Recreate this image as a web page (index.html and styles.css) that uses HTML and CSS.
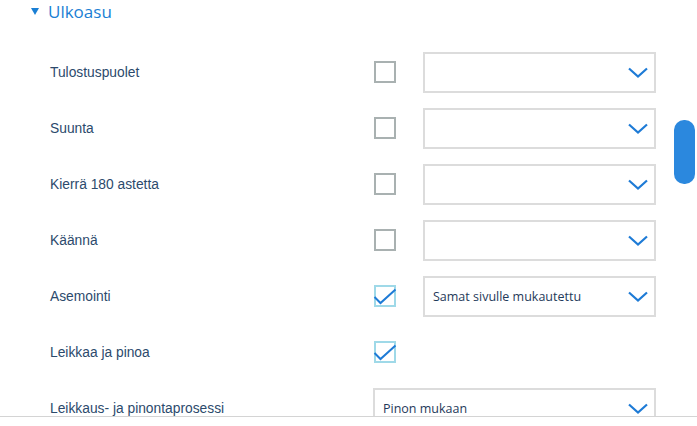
FILE: index.html
```html
<!DOCTYPE html>
<html>
<head>
<meta charset="utf-8">
<link rel="stylesheet" href="styles.css">
</head>
<body>
<div class="panel">
  <div class="header">
    <span class="tri"></span>
    <span class="title">Ulkoasu</span>
  </div>
  <div class="rows">
    <div class="row">
      <div class="label">Tulostuspuolet</div>
      <div class="cb"></div>
      <div class="dd"><span class="dd-text"></span><svg class="chev" width="20" height="11" viewBox="0 0 20 11"><path d="M1 1.5 L10 9.5 L19 1.5" fill="none" stroke="#1e7bd6" stroke-width="2.2"/></svg></div>
    </div>
    <div class="row">
      <div class="label">Suunta</div>
      <div class="cb"></div>
      <div class="dd"><span class="dd-text"></span><svg class="chev" width="20" height="11" viewBox="0 0 20 11"><path d="M1 1.5 L10 9.5 L19 1.5" fill="none" stroke="#1e7bd6" stroke-width="2.2"/></svg></div>
    </div>
    <div class="row">
      <div class="label">Kierrä 180 astetta</div>
      <div class="cb"></div>
      <div class="dd"><span class="dd-text"></span><svg class="chev" width="20" height="11" viewBox="0 0 20 11"><path d="M1 1.5 L10 9.5 L19 1.5" fill="none" stroke="#1e7bd6" stroke-width="2.2"/></svg></div>
    </div>
    <div class="row">
      <div class="label">Käännä</div>
      <div class="cb"></div>
      <div class="dd"><span class="dd-text"></span><svg class="chev" width="20" height="11" viewBox="0 0 20 11"><path d="M1 1.5 L10 9.5 L19 1.5" fill="none" stroke="#1e7bd6" stroke-width="2.2"/></svg></div>
    </div>
    <div class="row">
      <div class="label">Asemointi</div>
      <div class="cb checked"><svg width="22" height="22" viewBox="0 0 22 22"><path d="M0.5 12 L6.5 18 L21.5 4.5" fill="none" stroke="#1e7bd6" stroke-width="2"/></svg></div>
      <div class="dd"><span class="dd-text">Samat sivulle mukautettu</span><svg class="chev" width="20" height="11" viewBox="0 0 20 11"><path d="M1 1.5 L10 9.5 L19 1.5" fill="none" stroke="#1e7bd6" stroke-width="2.2"/></svg></div>
    </div>
    <div class="row">
      <div class="label">Leikkaa ja pinoa</div>
      <div class="cb checked"><svg width="22" height="22" viewBox="0 0 22 22"><path d="M0.5 12 L6.5 18 L21.5 4.5" fill="none" stroke="#1e7bd6" stroke-width="2"/></svg></div>
    </div>
    <div class="row">
      <div class="label">Leikkaus- ja pinontaprosessi</div>
      <div class="dd wide"><span class="dd-text">Pinon mukaan</span><svg class="chev" width="20" height="11" viewBox="0 0 20 11"><path d="M1 1.5 L10 9.5 L19 1.5" fill="none" stroke="#1e7bd6" stroke-width="2.2"/></svg></div>
    </div>
  </div>
  <div class="scrollbar"></div>
</div>
</body>
</html>
```
FILE: styles.css
```css
* { box-sizing: border-box; }
html, body { margin: 0; padding: 0; background: #ffffff; }
.panel {
  position: relative;
  width: 697px;
  height: 417px;
  overflow: hidden;
  border-bottom: 1px solid #d4d4d4;
}
.header {
  height: 44px;
  display: flex;
  align-items: flex-start;
  padding-left: 31px;
  padding-top: 1px;
}
.tri {
  width: 0;
  height: 0;
  border-left: 4.5px solid transparent;
  border-right: 4.5px solid transparent;
  border-top: 7px solid #1a7fd4;
  margin-top: 7px;
  margin-right: 9px;
}
.title {
  font-family: "Open Sans", "Noto Sans", sans-serif;
  font-size: 17px;
  line-height: 22px;
  color: #1a7fd4;
}
.rows { display: flex; flex-direction: column; }
.row {
  height: 56px;
  display: flex;
  align-items: center;
  padding-left: 50px;
}
.label {
  width: 324px;
  font-family: "Liberation Sans", Arial, sans-serif;
  font-size: 13.8px;
  color: #2c4a6c;
}
.cb {
  width: 22px;
  height: 22px;
  border: 2px solid #a9b1b1;
  margin-right: 27px;
  position: relative;
}
.cb.checked { border-color: #9fd9e8; }
.cb svg { position: absolute; left: -2px; top: -2px; overflow: visible; }
.dd {
  width: 233px;
  height: 41px;
  border: 2px solid #dcdcdc;
  display: flex;
  align-items: center;
  justify-content: space-between;
  padding-left: 8px;
  padding-right: 6px;
}
.dd.wide { width: 283px; margin-left: -1px; }
.dd-text {
  font-family: "Open Sans", "Noto Sans", sans-serif;
  font-size: 12.5px;
  color: #1f3a5a;
}
.chev { display: block; }
.scrollbar {
  position: absolute;
  left: 674px;
  top: 120px;
  width: 21px;
  height: 64px;
  border-radius: 10px;
  background: #2b88de;
}
```
